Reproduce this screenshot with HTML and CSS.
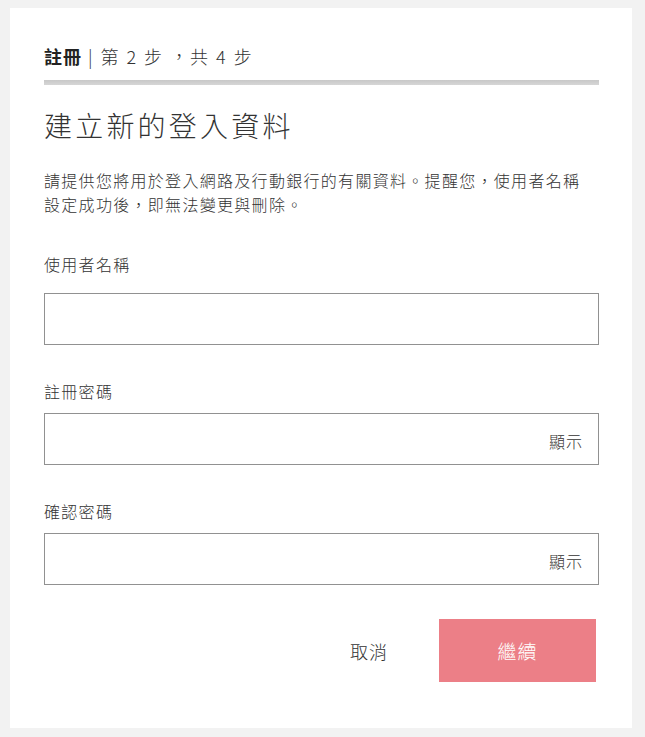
FILE: index.html
```html
<!DOCTYPE html>
<html lang="zh-Hant">
<head>
<meta charset="utf-8">
<title>註冊</title>
<link rel="stylesheet" href="styles.css">
</head>
<body>
<div class="card">
  <div class="step"><strong>註冊</strong> | 第 2 步 ，共 4 步</div>
  <div class="bar"></div>
  <h1 class="title">建立新的登入資料</h1>
  <p class="desc">請提供您將用於登入網路及行動銀行的有關資料。提醒您，使用者名稱設定成功後，即無法變更與刪除。</p>

  <div class="field first">
    <label class="label">使用者名稱</label>
    <div class="input"></div>
  </div>
  <div class="field">
    <label class="label">註冊密碼</label>
    <div class="input"><span class="show">顯示</span></div>
  </div>
  <div class="field">
    <label class="label">確認密碼</label>
    <div class="input"><span class="show">顯示</span></div>
  </div>

  <div class="actions">
    <button class="cancel">取消</button>
    <button class="next">繼續</button>
  </div>
</div>
</body>
</html>
```

FILE: styles.css
```css
html, body {
  margin: 0;
  padding: 0;
  background: #f2f2f2;
}
body {
  padding: 8px 13px 9px 10px;
  font-family: "Noto Sans CJK TC", "Noto Sans", sans-serif;
  color: #333;
}
.card {
  background: #fff;
  padding: 36px 33px 46px 34px;
}
.step {
  font-size: 18px;
  line-height: 24px;
  color: #333;
  font-weight: 300;
  letter-spacing: 2px;
}
.step strong {
  font-weight: 700;
  color: #222;
  letter-spacing: 1px;
}
.bar {
  margin-top: 12px;
  height: 5px;
  background: linear-gradient(#c8c8c8, #d6d6d6);
}
.title {
  margin: 22px 0 0 0;
  font-size: 28px;
  line-height: 36px;
  font-weight: 300;
  color: #333;
  letter-spacing: 3.2px;
}
.desc {
  margin: 25px 0 0 0;
  max-width: 545px;
  font-size: 16px;
  line-height: 24px;
  color: #333;
  font-weight: 300;
  letter-spacing: 1.3px;
}
.field {
  margin-top: 34px;
}
.field.first {
  margin-top: 36px;
}
.label {
  display: block;
  font-size: 16px;
  line-height: 24px;
  color: #333;
  font-weight: 300;
  letter-spacing: 1.3px;
  margin-bottom: 10px;
}
.field.first .label {
  margin-bottom: 17px;
}
.input {
  height: 50px;
  border: 1px solid #919191;
  display: flex;
  align-items: center;
  justify-content: flex-end;
  padding: 0 15px;
}
.show {
  font-size: 16px;
  line-height: 24px;
  color: #333;
  font-weight: 300;
  letter-spacing: 1px;
  margin-top: 4px;
}
.actions {
  margin-top: 34px;
  display: flex;
  justify-content: flex-end;
  align-items: center;
  padding-right: 3px;
}
.cancel {
  background: none;
  border: none;
  padding: 0;
  font-family: inherit;
  font-size: 18px;
  font-weight: 300;
  line-height: 24px;
  letter-spacing: 1px;
  color: #333;
  margin-right: 51px;
}
.next {
  width: 157px;
  height: 63px;
  background: #ec7f87;
  border: none;
  color: #fff;
  font-family: inherit;
  font-size: 19px;
  font-weight: 300;
  letter-spacing: 1px;
  padding: 0;
}
```
